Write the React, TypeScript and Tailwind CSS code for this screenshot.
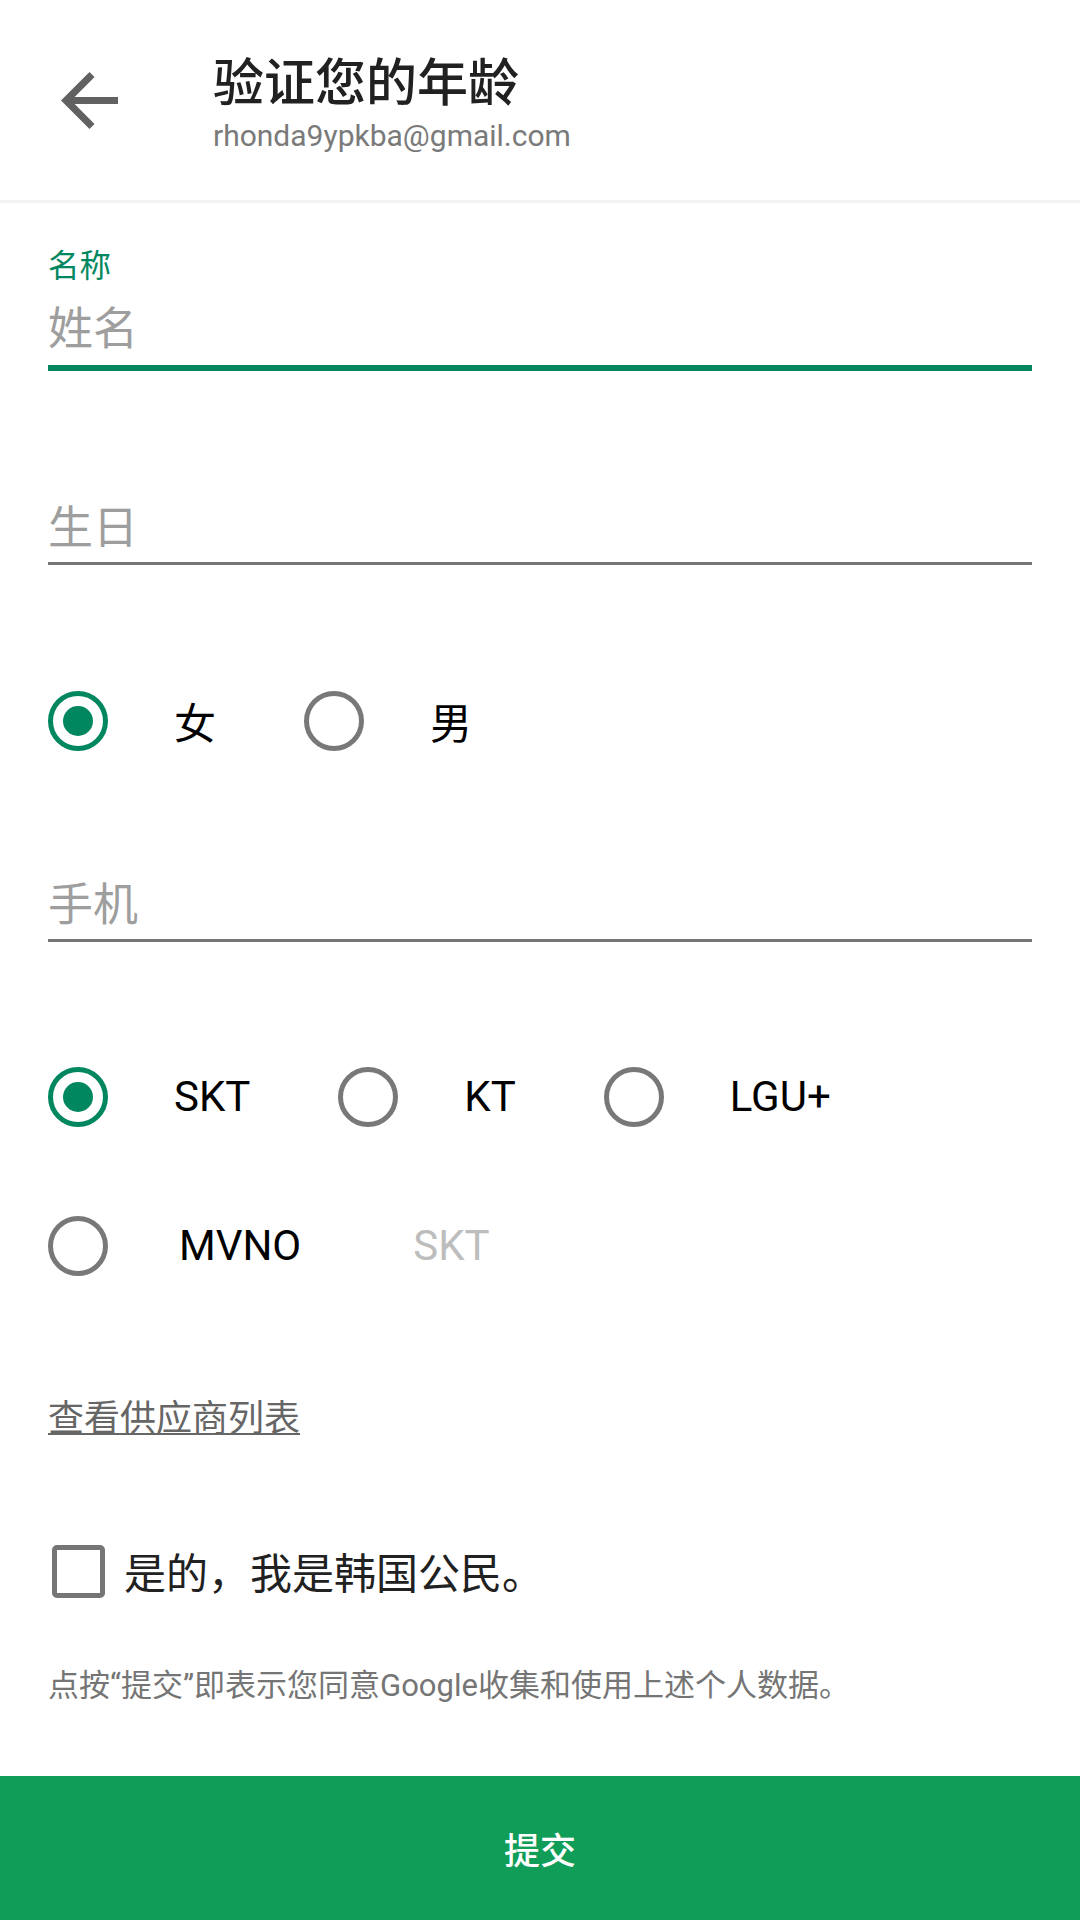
import { useState } from "react";

const cjk = "font-['Noto_Sans_CJK_SC',sans-serif]";
const latin = "font-['Roboto','Noto_Sans_CJK_SC',sans-serif]";

function Radio({ checked }: { checked: boolean }) {
  return (
    <span
      className={
        checked
          ? "flex h-[60px] w-[60px] shrink-0 items-center justify-center rounded-full border-[5px] border-[#01875f]"
          : "flex h-[60px] w-[60px] shrink-0 items-center justify-center rounded-full border-[5px] border-[#787878]"
      }
    >
      {checked && <span className="h-[30px] w-[30px] rounded-full bg-[#01875f]" />}
    </span>
  );
}

function RadioItem({
  label,
  checked,
  onClick,
  first,
  latinText,
}: {
  label: string;
  checked: boolean;
  onClick: () => void;
  first?: boolean;
  latinText?: boolean;
}) {
  return (
    <button
      onClick={onClick}
      className={first ? "flex items-center" : "ml-[88px] flex items-center"}
    >
      <Radio checked={checked} />
      <span
        className={
          (latinText ? latin : cjk) +
          " ml-[66px] text-[42px] leading-[42px] text-black"
        }
      >
        {label}
      </span>
    </button>
  );
}

function App() {
  const [gender, setGender] = useState("女");
  const [carrier, setCarrier] = useState("SKT");
  const [citizen, setCitizen] = useState(false);

  return (
    <div className="flex h-[1920px] w-[1080px] flex-col bg-white">
      {/* header */}
      <div className="flex h-[203px] shrink-0 items-center border-b-[3px] border-[#f2f2f2]">
        <svg
          viewBox="4 4 16 16"
          className="ml-[61px] h-[57px] w-[57px] shrink-0"
          fill="#616161"
        >
          <path d="M20 11H7.83l5.59-5.59L12 4l-8 8 8 8 1.41-1.41L7.83 13H20v-2z" />
        </svg>
        <div className="ml-[95px] mt-[4px] flex flex-col">
          <span className={cjk + " text-[51px] leading-[60px] font-medium text-[#212121]"}>
            验证您的年龄
          </span>
          <span className={latin + " mt-[7px] text-[30px] leading-[40px] text-[#7a7a7a]"}>
            rhonda9ypkba@gmail.com
          </span>
        </div>
      </div>

      {/* form */}
      <div className="flex flex-col px-[48px]">
        <span className={cjk + " mt-[40px] text-[31.5px] leading-[40px] text-[#01875f]"}>
          名称
        </span>
        <span className={cjk + " mt-[13px] text-[45px] leading-[60px] text-[#9e9e9e]"}>
          姓名
        </span>
        <div className="mt-[9px] h-[6px] bg-[#01875f]" />

        <span className={cjk + " mt-[124px] text-[45px] leading-[60px] text-[#9e9e9e]"}>
          生日
        </span>
        <div className="mt-[7px] h-[3px] bg-[#757575]" />

        <div className="mt-[116px] flex h-[80px] items-center">
          <RadioItem first label="女" checked={gender === "女"} onClick={() => setGender("女")} />
          <RadioItem label="男" checked={gender === "男"} onClick={() => setGender("男")} />
        </div>

        <span className={cjk + " mt-[111px] text-[45px] leading-[60px] text-[#9e9e9e]"}>
          手机
        </span>
        <div className="mt-[7px] h-[3px] bg-[#757575]" />

        <div className="mt-[115px] flex h-[80px] items-center">
          {["SKT", "KT", "LGU+"].map((c, i) => (
            <RadioItem
              key={c}
              first={i === 0}
              latinText
              label={c}
              checked={carrier === c}
              onClick={() => setCarrier(c)}
            />
          ))}
        </div>

        <div className="mt-[69px] flex h-[80px] items-center">
          <button onClick={() => setCarrier("MVNO")} className="flex items-center">
            <Radio checked={carrier === "MVNO"} />
            <span className={latin + " ml-[71px] text-[42px] leading-[42px] text-black"}>
              MVNO
            </span>
          </button>
          <span className={latin + " ml-[112px] text-[42px] leading-[42px] text-[#bdbdbd]"}>
            SKT
          </span>
        </div>

        <a
          className={
            cjk +
            " mt-[104px] self-start text-[36px] leading-[50px] text-[#666666] underline decoration-[2px] underline-offset-[2px]"
          }
        >
          查看供应商列表
        </a>

        <div className="mt-[101px] flex h-[60px] items-center">
          <button
            onClick={() => setCitizen(!citizen)}
            className="ml-[4px] flex h-[53px] w-[53px] shrink-0 items-center justify-center rounded-[5px] border-[5px] border-[#757575]"
          >
            {citizen && <span className="h-[25px] w-[25px] bg-[#757575]" />}
          </button>
          <span className={cjk + " ml-[19px] text-[42px] leading-[42px] text-[#212121]"}>
            是的，我是韩国公民。
          </span>
        </div>

        <span className={latin + " mt-[65px] text-[31px] leading-[40px] text-[#757575]"}>
          点按“提交”即表示您同意Google收集和使用上述个人数据。
        </span>
      </div>

      <button
        className={
          cjk +
          " mt-auto flex h-[144px] w-full shrink-0 items-center justify-center bg-[#0f9d58] text-[36px] font-medium text-white"
        }
      >
        提交
      </button>
    </div>
  );
}

export default App;
